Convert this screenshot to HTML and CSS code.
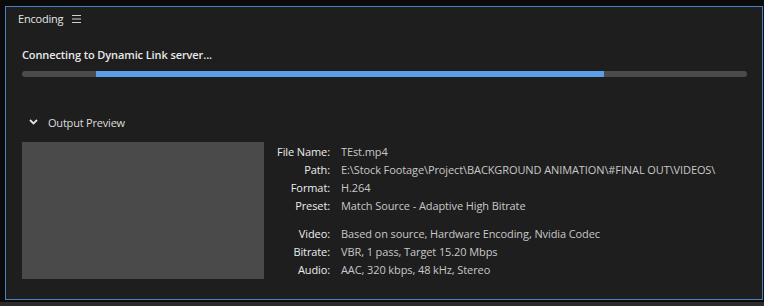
FILE: index.html
```html
<!DOCTYPE html>
<html>
<head>
<meta charset="utf-8">
<link rel="stylesheet" href="styles.css">
</head>
<body>
<div class="frame">
  <div class="panel">
    <div class="tabbar">
      <span class="tab-title">Encoding</span>
      <svg class="menu-icon" width="9" height="8" viewBox="0 0 9 8"><rect x="0" y="0" width="9" height="1" fill="#d0d0d0"/><rect x="0" y="3.5" width="9" height="1" fill="#d0d0d0"/><rect x="0" y="7" width="9" height="1" fill="#d0d0d0"/></svg>
    </div>
    <div class="status">Connecting to Dynamic Link server...</div>
    <div class="progress"><div class="progress-fill" style="margin-left:74px;width:508px"></div></div>
    <div class="section-head">
      <svg class="chevron" width="9" height="6" viewBox="0 0 9 6"><path d="M1 1 L4.5 4.5 L8 1" fill="none" stroke="#e0e0e0" stroke-width="1.8"/></svg>
      <span>Output Preview</span>
    </div>
    <div class="preview-row">
      <div class="thumb"></div>
      <div class="details">
        <div class="group">
          <div class="lbl">File Name:</div><div class="val">TEst.mp4</div>
          <div class="lbl">Path:</div><div class="val">E:\Stock Footage\Project\BACKGROUND ANIMATION\#FINAL OUT\VIDEOS\</div>
          <div class="lbl">Format:</div><div class="val">H.264</div>
          <div class="lbl">Preset:</div><div class="val">Match Source - Adaptive High Bitrate</div>
        </div>
        <div class="group">
          <div class="lbl">Video:</div><div class="val">Based on source, Hardware Encoding, Nvidia Codec</div>
          <div class="lbl">Bitrate:</div><div class="val">VBR, 1 pass, Target 15.20 Mbps</div>
          <div class="lbl">Audio:</div><div class="val">AAC, 320 kbps, 48 kHz, Stereo</div>
        </div>
      </div>
    </div>
  </div>
  <div class="bottom-strip"></div>
</div>
</body>
</html>
```
FILE: styles.css
```css
html, body {
  margin: 0;
  padding: 0;
  background: #0b0b0b;
  width: 764px;
  height: 306px;
  overflow: hidden;
  font-family: "Open Sans", "Noto Sans", sans-serif;
}
.frame {
  padding: 6px 1px 0 5px;
  height: 306px;
  box-sizing: border-box;
  display: flex;
  flex-direction: column;
}
.panel {
  height: 294px;
  box-sizing: border-box;
  border: 1px solid #4a7fc4;
  background: #1e1e1e;
  padding: 0 0 0 16px;
}
.bottom-strip {
  margin-top: 2px;
  height: 4px;
  margin-left: -5px;
  margin-right: -1px;
  background: #2b2b2b;
}
.tabbar {
  height: 23px;
  display: flex;
  align-items: center;
  margin-left: -4px;
}
.tab-title {
  color: #e6e6e6;
  font-size: 11px;
  letter-spacing: -0.2px;
}
.menu-icon {
  margin-left: 9px;
}
.status {
  margin-top: 17px;
  color: #e8e8e8;
  font-size: 11px;
  font-weight: 600;
  letter-spacing: -0.1px;
  line-height: 15px;
}
.progress {
  margin-top: 9px;
  width: 725px;
  height: 6px;
  border-radius: 3px;
  background: #4b4b4b;
  display: flex;
}
.progress-fill {
  background: #5a9fe8;
  height: 6px;
}
.section-head {
  margin-top: 37px;
  display: flex;
  align-items: center;
  height: 16px;
  color: #dcdcdc;
  font-size: 11px;
  letter-spacing: -0.2px;
}
.chevron {
  margin-left: 7px;
  margin-right: 10px;
}
.preview-row {
  margin-top: 12px;
  display: flex;
}
.thumb {
  width: 242px;
  height: 137px;
  background: #4a4a4a;
}
.details {
  margin-left: 8px;
  padding-top: 1px;
  display: flex;
  flex-direction: column;
  gap: 10px;
}
.group {
  display: grid;
  grid-template-columns: 58px auto;
  column-gap: 11px;
  font-size: 11px;
  line-height: 18px;
  letter-spacing: -0.1px;
}
.lbl {
  text-align: right;
  color: #ececec;
}
.val {
  color: #c8c8c8;
}
```
